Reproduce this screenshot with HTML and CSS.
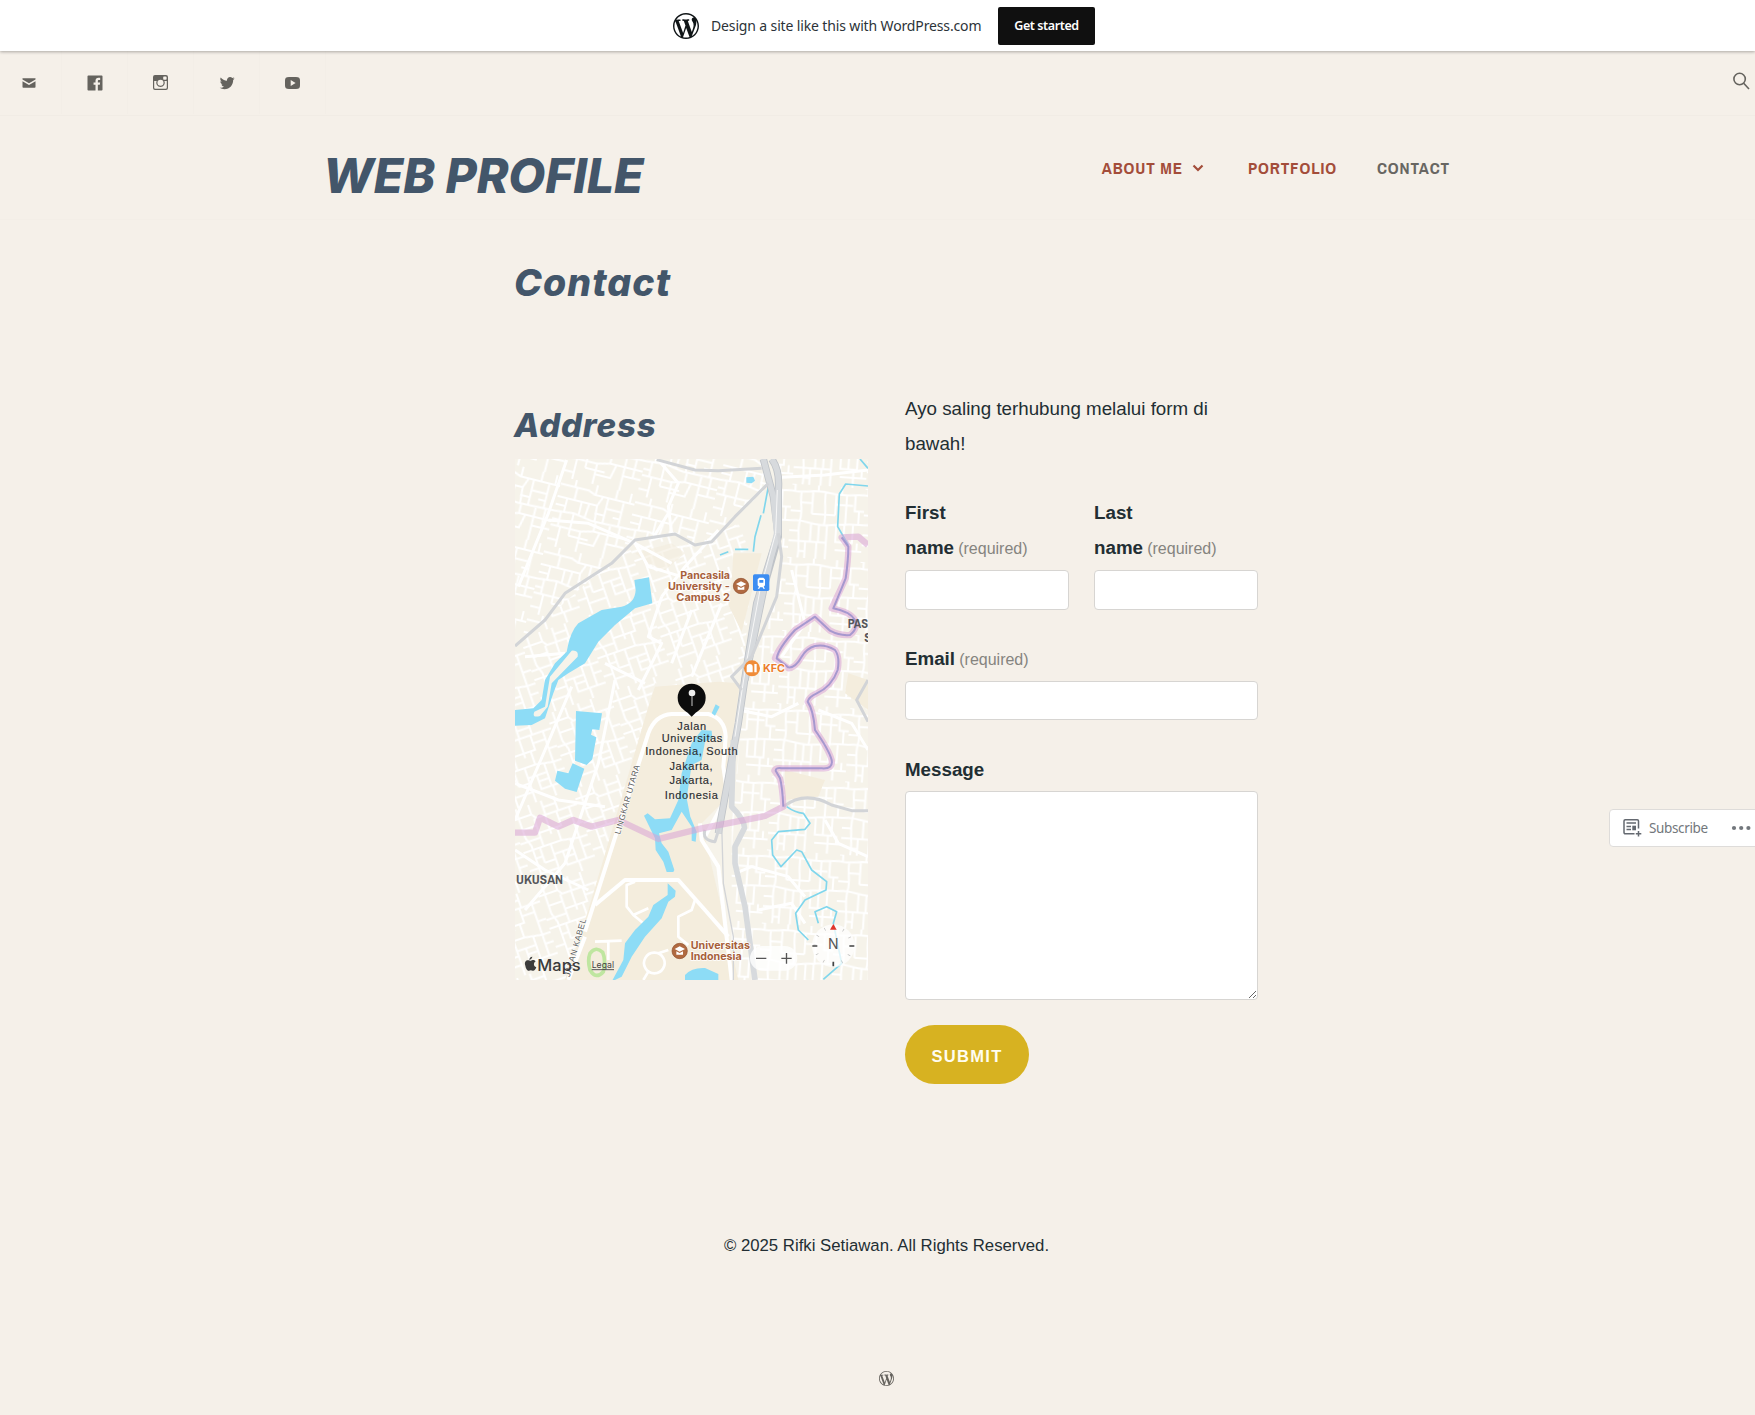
FILE: index.html
```html
<!DOCTYPE html>
<html lang="id">
<head>
<meta charset="utf-8">
<title>Contact – WEB PROFILE</title>
<link rel="stylesheet" href="styles.css">
</head>
<body>
<svg class="defs" width="0" height="0" aria-hidden="true">
  <symbol id="wp" viewBox="0 0 20 20"><path d="M20 10c0-5.51-4.49-10-10-10C4.48 0 0 4.49 0 10c0 5.52 4.48 10 10 10 5.51 0 10-4.48 10-10zM7.78 15.37L4.37 6.22c.55-.02 1.17-.08 1.17-.08.5-.06.44-1.13-.06-1.11 0 0-1.45.11-2.37.11-.18 0-.37 0-.58-.01C4.12 2.69 6.87 1.11 10 1.11c2.33 0 4.45.87 6.05 2.34-.68-.11-1.65.39-1.65 1.58 0 .74.45 1.36.9 2.1.35.61.55 1.36.55 2.46 0 1.49-1.4 5-1.4 5l-3.03-8.37c.54-.02.82-.17.82-.17.5-.05.44-1.25-.06-1.22 0 0-1.44.12-2.38.12-.87 0-2.33-.12-2.33-.12-.5-.03-.56 1.2-.06 1.22l.92.08 1.26 3.41zM17.41 10c.24-.64.74-1.87.43-4.25.7 1.29 1.05 2.71 1.05 4.25 0 3.29-1.73 6.24-4.4 7.78.97-2.59 1.94-5.2 2.92-7.78zM6.1 18.09C3.12 16.65 1.11 13.53 1.11 10c0-1.3.23-2.48.72-3.59C3.25 10.3 4.67 14.2 6.1 18.09zm4.03-6.63l2.58 6.98c-.86.29-1.76.45-2.71.45-.79 0-1.57-.11-2.29-.33.81-2.38 1.62-4.74 2.42-7.1z"/></symbol>
</svg>

<div class="promo">
  <svg class="promo-logo"><use href="#wp"/></svg>
  <span class="promo-text">Design a site like this with WordPress.com</span>
  <a class="promo-button">Get started</a>
</div>

<div class="toolbar">
  <ul class="social">
    <li><svg width="18" height="18" viewBox="0 0 18 18"><path d="M2.5 4.2h13v1.3L9 9.3 2.500 5.500zM2.500 7.300 9 11l6.500-3.700v5.600a.8.8 0 0 1-.8.8H3.300a.8.8 0 0 1-.8-.8z"/></svg></li>
    <li><svg width="20" height="20" viewBox="0 0 24 24"><path d="M20.007,3H3.993C3.445,3,3,3.445,3,3.993v16.013C3,20.555,3.445,21,3.993,21h8.621v-6.971h-2.346v-2.717h2.346V9.31c0-2.325,1.42-3.591,3.494-3.591c0.993,0,1.847,0.074,2.096,0.107v2.43l-1.438,0.001c-1.128,0-1.346,0.536-1.346,1.323v1.734h2.69l-0.35,2.717h-2.34V21h4.587C20.555,21,21,20.555,21,20.007V3.993C21,3.445,20.555,3,20.007,3z"/></svg></li>
    <li><svg width="15" height="15" viewBox="0 0 15 15"><path fill-rule="evenodd" d="M2 0h11a2 2 0 0 1 2 2v11a2 2 0 0 1-2 2H2a2 2 0 0 1-2-2V2a2 2 0 0 1 2-2zM1.200 6v6.800a1 1 0 0 0 1 1h10.600a1 1 0 0 0 1-1V6h-2.400a4.300 4.300 0 1 1-7.800 0zM11 1.500h1.800a.8.8 0 0 1 .8.8V4a.8.8 0 0 1-.8.800H11a.8.8 0 0 1-.8-.8V2.300a.8.8 0 0 1 .8-.8zM7.500 4.700a3 3 0 1 0 0 6.100 3 3 0 0 0 0-6.100z"/></svg></li>
    <li><svg width="18" height="18" viewBox="0 0 24 24"><path d="M22.23,5.924c-0.736,0.326-1.527,0.547-2.357,0.646c0.847-0.508,1.498-1.312,1.804-2.27c-0.793,0.47-1.671,0.812-2.606,0.996C18.324,4.498,17.257,4,16.077,4c-2.266,0-4.103,1.837-4.103,4.103c0,0.322,0.036,0.635,0.106,0.935C8.67,8.867,5.647,7.234,3.623,4.751C3.27,5.357,3.067,6.062,3.067,6.814c0,1.424,0.724,2.679,1.825,3.415c-0.673-0.021-1.305-0.206-1.859-0.513c0,0.017,0,0.034,0,0.052c0,1.988,1.414,3.647,3.292,4.023c-0.344,0.094-0.707,0.144-1.081,0.144c-0.264,0-0.521-0.026-0.772-0.074c0.522,1.63,2.038,2.816,3.833,2.85c-1.404,1.1-3.174,1.756-5.096,1.756c-0.331,0-0.658-0.019-0.979-0.057c1.816,1.164,3.973,1.843,6.29,1.843c7.547,0,11.675-6.252,11.675-11.675c0-0.178-0.004-0.355-0.012-0.531C20.985,7.47,21.68,6.747,22.23,5.924z"/></svg></li>
    <li><svg width="15" height="12" viewBox="0 0 15 12"><path fill-rule="evenodd" d="M4 0h7c3 0 4 1 4 3.500v5c0 2.500-1 3.500-4 3.500H4c-3 0-4-1-4-3.500v-5C0 1 1 0 4 0zM5.700 3v6L10.600 6z"/></svg></li>
  </ul>
  <svg class="search" width="17" height="18" viewBox="0 0 17 18"><circle cx="6.600" cy="7" r="5.700"/><path d="M10.700 11.300 16 17"/></svg>
</div>

<header class="masthead">
  <div class="site-title">WEB PROFILE</div>
  <nav class="menu">
    <a class="about">ABOUT ME</a>
    <svg class="chevron" width="12" height="8" viewBox="0 0 12 8"><path d="M1.500 1.500 6 6l4.500-4.500"/></svg>
    <a class="portfolio">PORTFOLIO</a>
    <a class="current">CONTACT</a>
  </nav>
</header>

<main class="content">
  <h1 class="page-title">Contact</h1>
  <div class="columns">
    <section>
      <h2 class="address">Address</h2>
      <svg class="map" viewBox="30 207 1059 1563">
        <defs>
          <pattern id="streetsA" width="230" height="210" patternUnits="userSpaceOnUse" patternTransform="rotate(14)">
            <path class="street" d="M0 22h88l20 8h122M0 60h52v-38M52 60h70l12-30M0 105l60-6 58 10 112-4M30 60v42M75 62v40M98 62l-4 42M122 60l4 48M150 30v76M150 62h48M198 34v70M172 0v30M0 148h90l40-10h100M22 105v43M60 100v68M60 168h60M92 148v62M92 180h48l10-44M175 106v32M205 106v58h25M175 165h30M175 138v72M30 148v62M0 190h30M45 0v22M110 0v30M0 84h30M215 0v30M176 84h22M120 84h30M130 138v-30M0 128h22"/>
          </pattern>
          <pattern id="streetsB" width="200" height="240" patternUnits="userSpaceOnUse" patternTransform="rotate(-19)">
            <path class="street" d="M20 0v90l10 30v120M0 30h60l10 14h130M64 44v88M20 66h44M98 44v60M64 90h70v-46M134 70h40M174 44v98M20 104h44M30 132h90l54 10h26M120 132v-42M52 132v48M30 160h22M86 132v108M86 164h60v-28M52 180h34M30 208h56M114 164v44h86M146 164v44M174 142v66M114 184h32M150 208v32M0 104h20M0 132h30M0 190h30M100 0v44M140 0v44M60 0v30M100 20h40M174 100h26M174 170h26"/>
          </pattern>
          <pattern id="streetsC" width="220" height="220" patternUnits="userSpaceOnUse" patternTransform="rotate(4)">
            <path class="street" d="M0 20c40 10 60-10 110 0s70 0 110 0M30 22c-6 30 8 50 0 86s6 70 0 112M64 16v70M30 54h34M64 86h70M102 18c-4 40 8 70 0 100M134 24v62M134 54h52M166 24v92M192 20v50h28M0 110c40-8 60 10 102 8s70-10 118-8M0 80h30M64 114v56h48M88 116v54M112 118v102M140 116v50h50v-54M164 114v52M0 170h64M50 170v50M84 170v50M140 190h80M180 166v54M30 200h20M0 140h30M205 110v-40M205 190v-24M0 0h10v20M80 0v18M150 0v22"/>
          </pattern>
          <clipPath id="mapClip"><rect x="30" y="207" width="1059" height="1563"/></clipPath>
        </defs>
        <g clip-path="url(#mapClip)">
          <rect x="30" y="207" width="1059" height="1563" fill="#f6f3ea"/>
          <path fill="url(#streetsA)" d="M30 207H780L790 290 620 450 570 465 510 430 390 450 30 770z"/>
          <path fill="url(#streetsB)" d="M30 770 390 450 510 430 570 465 700 400 740 500 720 800 650 900 450 880 250 1620 180 1770H30z"/>
          <path fill="url(#streetsC)" d="M820 207h269v1563H680V1300L720 900 830 560z"/>

          <g fill="#f4eddd">
            <path d="M685 490h85l-60 235-40-80 10-70z"/>
            <path d="M640 875 705 880 680 1060 650 1240 590 1300 700 1770H180L250 1560 330 1290 430 950 450 890z"/>
            <path d="M840 1140 960 1170 940 1220 840 1230zM1030 850 1090 870V960L1020 910z"/>
            <path d="M390 490 500 460 540 490 480 540 430 520z" opacity=".6"/>
          </g>

          <g class="road">
            <path d="M185 210 130 370 40 590M130 390 250 400 390 460 500 520M390 460 430 530 530 560M500 430 490 350 520 280 460 210M490 370 440 450M640 420 540 530 470 620M830 262 960 255 1089 240M470 620 430 740 470 760 440 820 400 900M560 660 500 820M650 640 560 860M60 800 180 790M300 820 420 880"/>
            <path d="M200 890 120 1080 30 1290M330 870 280 1120 180 1420 60 1560M30 1180 160 1230 300 1250M30 1380 120 1440 250 1500"/>
            <path d="M690 1450 740 1430 850 1460 900 1520M760 1560 860 1540 900 1600M700 960 800 980 880 940M860 540 900 700 830 800M960 1290 1000 1360 1089 1400M940 960 1040 1000 1089 1080"/>
          </g>
          <g class="avenue">
            <path d="M240 1625 430 1030Q450 975 500 972H610Q660 985 662 1040L655 1130 665 1200M585 1300 590 1350 640 1430 680 1770"/>
            <path d="M270 1545 360 1470H520L600 1560 670 1640M600 1340 665 1220M240 1640 190 1770"/>
            <path class="lane" d="M390 1475 365 1485V1550L385 1575 430 1555M385 1575 415 1600M570 1530 560 1560 520 1580V1640L550 1665M270 1655 350 1652M310 1655V1710M490 1680 460 1690M447 1688a31 31 0 1 0 2 0zM430 1745 415 1770"/>
          </g>

          <g class="water">
            <path d="M388 570 432 562 442 640 390 655 330 705 280 755 240 820 190 850 160 870 145 910 120 985 80 1005 30 1007V960L85 955 110 930 120 870 150 820 185 785Q195 725 220 700L290 660 350 650Q390 640 392 600z"/>
            <path d="M213 963 291 970 283 1020 262 1018 258 1034 274 1042 262 1108 245 1125 210 1112z"/>
            <path d="M203 1120 238 1136 215 1206 180 1196 150 1172 157 1142 190 1150z"/>
            <path d="M632 943 644 950 630 977 620 970zM590 1020 620 1022 622 1045 600 1055 590 1110 560 1125 545 1225 556 1280 575 1325 572 1355 560 1352V1310L530 1265 500 1320 462 1330 470 1360 490 1385 508 1440 505 1446H485L475 1415 452 1380 450 1345 417 1277 428 1270 450 1288 495 1285 520 1230 530 1150 560 1060z"/>
            <path d="M488 1480 512 1502 510 1520 490 1535 470 1585 420 1640 380 1700 350 1760 320 1775 355 1710 360 1660 390 1620 430 1580 445 1545 488 1515z"/>
            <path d="M540 1755Q560 1732 600 1734L640 1752V1775H540zM724 262 745 260 750 272 740 280 724 278z"/>
          </g>
          <path d="M200 782Q222 780 218 800L140 880 128 950 105 978Q80 985 88 965L120 950 135 860z" fill="#f6f3ea"/>
          <path class="stream" d="M1065 207 1089 235M1089 288 1022 282 1003 312 998 410 1030 465M775 210 790 290 775 370M768 376 750 440 745 485M645 495 670 485M690 478 730 478M845 1250Q870 1268 895 1270L915 1300 900 1318 820 1325 800 1350 803 1395 828 1430 875 1380 890 1385 920 1440 965 1475 963 1500 900 1530 872 1570 880 1620 910 1650M940 1600 930 1565 965 1550 995 1565 985 1600 1010 1720 955 1768"/>

          <g class="highway-case">
            <path d="M775 207 805 320 820 440 780 580 720 870"/>
            <path d="M800 207Q825 240 820 300V430L755 640 725 830 700 1000 640 1330"/>
          </g>
          <g class="highway">
            <path d="M775 207 805 320 815 430 780 580 720 870"/>
            <path d="M800 207Q825 240 820 300V430L755 640 725 830 700 1000 640 1330"/>
            <path d="M685 1050 680 1250Q720 1290 718 1315L690 1370V1420L720 1550 750 1770"/>
          </g>
          <path d="M817 300 812 430 765 600 722 830 690 1040" stroke="#f7f7f7" stroke-width="3" fill="none"/>
          <g class="minor-gray">
            <path d="M455 209 570 240 640 242 770 235M30 768 120 690 180 610 320 520 390 450 510 432 570 465 620 455 690 380 790 280"/>
            <path d="M820 430 830 500 815 620 740 800 680 860 710 900M1089 995 1055 930 1089 870M835 1250Q900 1200 980 1245L1040 1262H1089M600 1320Q590 1350 630 1355L650 1290"/>
            <path class="rail" d="M650 1300 655 1480 685 1640V1770"/>
          </g>

          <path class="border-wide" d="M30 1328H90L105 1283 160 1310 205 1290 260 1310 340 1290 460 1347 590 1315 780 1278 835 1250Q832 1190 825 1165L808 1142Q812 1132 830 1135H950Q985 1138 980 1110 972 1080 930 1020 925 960 908 935 912 920 935 910 980 890 998 840 1005 800 990 780 960 762 930 768 905 775 890 800 870 835 850 835L810 805Q820 775 870 720L930 680 975 722Q1005 738 1035 735 1060 715 1050 690 1035 665 980 655L1022 565Q1030 510 1030 470L1010 442 1060 440 1089 465"/>
          <path class="border-line" d="M835 1250Q832 1190 825 1165L812 1142Q812 1132 830 1135H950Q985 1138 980 1110 972 1080 930 1020 925 960 908 935 912 920 935 910 980 890 998 840 1005 800 990 780 960 762 930 768 905 775 890 800 870 835 850 832L815 805Q820 775 870 720L930 680 975 722Q1005 738 1035 735 1060 715 1050 690 1035 665 985 655L1022 565Q1030 510 1030 470L1010 442"/>

          <path d="M255 1690q-8 20 0 50 18 30 40 5 8-35-2-58-20-20-38 3z" fill="none" stroke="#bfe6a0" stroke-width="11"/>

          <g class="poi">
            <text x="526" y="566" textLength="149" lengthAdjust="spacingAndGlyphs">Pancasila</text>
            <text x="489" y="600" textLength="185" lengthAdjust="spacingAndGlyphs">University -</text>
            <text x="514" y="633" textLength="161" lengthAdjust="spacingAndGlyphs">Campus 2</text>
            <text x="557" y="1678" textLength="178" lengthAdjust="spacingAndGlyphs">Universitas</text>
            <text x="557" y="1711" textLength="153" lengthAdjust="spacingAndGlyphs">Indonesia</text>
            <text x="774" y="847" textLength="66" lengthAdjust="spacingAndGlyphs" class="food">KFC</text>
          </g>
          <g fill="#b06a41" stroke="#8e4d2a" stroke-width="2"><circle cx="708" cy="588" r="23"/><circle cx="524" cy="1683" r="23"/></g>
          <g fill="#fff"><path d="M693 582 708 574 724 582 708 590zM698 589 708 594 718 589V599H698zM509 1677 524 1669 540 1677 524 1685zM514 1684 524 1689 534 1684V1694H514z"/></g>
          <circle cx="741" cy="835" r="24" fill="#f08c38"/>
          <path fill="#fff" d="M725 831q0-9 9-9t9 9v16h-18zM748 822h7v25h-7z"/>
          <rect x="744" y="553" width="49" height="50" rx="5" fill="#3c8df2"/>
          <path fill="#fff" fill-rule="evenodd" d="M763 563h12l5 5v18l-4 4 4 6h-5l-2-4h-8l-2 4h-5l4-6-4-4v-18zM763 570v8h12v-8z"/>

          <g class="place">
            <text x="1028" y="714" textLength="61" lengthAdjust="spacingAndGlyphs">PAS</text><text x="1078" y="755">S</text>
            <text x="33" y="1482" textLength="141" lengthAdjust="spacingAndGlyphs">UKUSAN</text>
          </g>
          <text class="roadname" transform="translate(345 1334) rotate(-74)" textLength="215">LINGKAR UTARA</text>
          <text class="roadname" transform="translate(194 1762) rotate(-74)" textLength="180">JALAN KABEL</text>

          <path d="M560 881a42 42 0 0 1 42 42c0 26-19 37-30 45l-12 12-12-12c-11-8-30-19-30-45a42 42 0 0 1 42-42z" fill="#0c0c0c"/>
          <circle cx="561" cy="909" r="10" fill="#eee"/><path d="M561 918v30" stroke="#999" stroke-width="4"/>
          <g class="pin-label" text-anchor="middle">
            <text x="560" y="1019" textLength="86">Jalan</text>
            <text x="561" y="1057" textLength="182">Universitas</text>
            <text x="559" y="1095" textLength="277">Indonesia, South</text>
            <text x="558" y="1139" textLength="129">Jakarta,</text>
            <text x="558" y="1182" textLength="129">Jakarta,</text>
            <text x="559" y="1226" textLength="159">Indonesia</text>
          </g>

          <g fill="#fff"><rect x="735" y="1668" width="142" height="74" rx="37" opacity=".8"/><circle cx="985" cy="1667" r="64" opacity=".75"/></g>
          <path d="M753 1705h31M829 1705h31M844.500 1689v32" stroke="#555" stroke-width="4"/>
          <circle cx="985" cy="1667" r="55" fill="none" stroke="#999" stroke-width="9" stroke-dasharray="2 26.800" opacity=".6"/>
          <path d="M922 1668h15M1033 1668h15M985 1715v14" stroke="#444" stroke-width="5"/>
          <path d="M985 1602 995 1619H975z" fill="#e0352b"/>
          <text class="compass" x="985" y="1676" text-anchor="middle">N</text>
          <path fill="#3b3b3b" d="M82 1701q-2 8-9 9 0-9 9-10zM61 1727c-4-11 2-17 10-16 5 2 6 2 12-1 4-1 7 1 9 4-8 5-6 16 2 18-3 7-6 11-11 10-4-2-7-2-11 0-6 1-10-8-11-15z"/>
          <text class="maps" x="97" y="1742" textLength="130" lengthAdjust="spacingAndGlyphs">Maps</text>
          <text class="legal" x="260" y="1734" textLength="67">Legal</text>
          <path d="M260 1739h67" stroke="#555" stroke-width="3"/>
        </g>
      </svg>
    </section>

    <form class="form">
      <p class="intro">Ayo saling terhubung melalui form di bawah!</p>
      <div class="name-row">
        <div class="field"><label>First<br>name <span>(required)</span></label><input type="text"></div>
        <div class="field"><label>Last<br>name <span>(required)</span></label><input type="text"></div>
      </div>
      <div class="field"><label>Email <span>(required)</span></label><input type="text"></div>
      <div class="field"><label>Message</label><textarea></textarea></div>
      <button class="submit" type="button">SUBMIT</button>
    </form>
  </div>
</main>

<footer class="footer">
  <p class="copyright">© 2025 Rifki Setiawan. All Rights Reserved.</p>
  <div class="credit"><svg width="15" height="15"><use href="#wp"/></svg></div>
</footer>

<div class="subscribe">
  <svg width="19" height="18" viewBox="0 0 19 18"><path fill="none" stroke="#646970" stroke-width="1.500" d="M11.500 14.700H2.200a1.200 1.200 0 0 1-1.200-1.200V2A1.200 1.200 0 0 1 2.200.8h12.100A1.200 1.200 0 0 1 15.500 2v7.500M3.500 4h9.500M3.500 7.500h4.500M3.500 10.500h4.500M15.500 12v5.500M12.800 14.700h5.500"/><path fill="#646970" d="M9.300 6.700H13v4.600H9.300z"/></svg>
  <span>Subscribe</span>
  <svg class="dots" width="20" height="6" viewBox="0 0 20 6"><circle cx="3" cy="3" r="2.100"/><circle cx="10.200" cy="3" r="2.100"/><circle cx="17.400" cy="3" r="2.100"/></svg>
</div>
</body>
</html>
```
FILE: styles.css
```css
* { box-sizing: border-box; }
body {
  margin: 0;
  height: 1415px;
  overflow: hidden;
  background: #f5f0e9;
  color: #222e33;
  font-family: "Liberation Sans", Arial, sans-serif;
  font-size: 18.75px;
}
.defs { position: absolute; }

.promo {
  position: relative;
  display: flex;
  align-items: center;
  height: 51px;
  padding: 0 0 0 673px;
  background: #fff;
  box-shadow: 0 1px 3px rgba(0, 0, 0, .3);
  font-family: "Noto Sans", "Open Sans", sans-serif;
}
.promo-logo { width: 26px; height: 26px; margin-right: 12px; fill: #101517; }
.promo-text { width: 287px; font-size: 14px; letter-spacing: -.14px; white-space: nowrap; color: #2c3338; }
.promo-button {
  display: flex;
  align-items: center;
  justify-content: center;
  width: 97px;
  height: 38px;
  border-radius: 2px;
  background: #101010;
  color: #fff;
  font-size: 12.5px;
  font-weight: 600;
  letter-spacing: -.4px;
}

.toolbar {
  display: flex;
  justify-content: space-between;
  height: 65px;
  border-bottom: 1px solid #f1ece5;
}
.social { display: flex; margin: 0; padding: 0; list-style: none; }
.social li {
  display: flex;
  align-items: center;
  justify-content: center;
  width: 66px;
  height: 63px;
  border-right: 1px solid #f3eee7;
  fill: #65635e;
}
.social li:first-child { width: 62px; padding-right: 4px; }
.search { margin: 21px 5px 0 0; fill: none; stroke: #65635e; stroke-width: 1.6; }

.masthead {
  display: flex;
  justify-content: space-between;
  height: 104px;
  padding: 30px 305px 0 323px;
  border-bottom: 1px solid #f3eee7;
}
.site-title {
  font: italic 800 48px/60px Inter, sans-serif;
  letter-spacing: -.1px;
  color: #43566a;
  white-space: nowrap;
}
.menu {
  display: flex;
  height: 43px;
  align-items: center;
  font: 700 17px/20px "Liberation Sans Narrow", "Archivo Narrow", "Liberation Sans", sans-serif;
  letter-spacing: .85px;
  color: #a34d3a;
}
.chevron { margin: 0 44px 0 9px; fill: none; stroke: #a34d3a; stroke-width: 2.2; }
.portfolio { margin-right: 40px; }
.current { color: #686662; }

.content { padding: 37px 497px 0 514px; }
.page-title { margin: 0; font: italic 800 37.5px/52px Inter, sans-serif; letter-spacing: 1.1px; color: #43566a; }
.columns { display: grid; grid-template-columns: 353px 353px; gap: 37px; margin: 82px 0 0 1px; }
.address { margin: 11px 0 11px -1px; font: italic 800 33px/46px Inter, sans-serif; letter-spacing: .8px; color: #43566a; }
.map { display: block; width: 353px; height: 521px; }

.street { fill: none; stroke: #fff; stroke-width: 6; }
.road { fill: none; stroke: #fff; stroke-width: 9; stroke-linejoin: round; }
.avenue { fill: none; stroke: #fff; stroke-width: 12; stroke-linejoin: round; }
.lane { stroke-width: 8; }
.water { fill: #8ddcf6; }
.stream { fill: none; stroke: #80d6ec; stroke-width: 5; stroke-linejoin: round; }
.highway-case { fill: none; stroke: #bfc3c8; stroke-width: 22; }
.highway { fill: none; stroke: #d7dadd; stroke-width: 17; stroke-linejoin: round; }
.minor-gray { fill: none; stroke: #d2d4d7; stroke-width: 9; stroke-linejoin: round; }
.rail { stroke-width: 4; }
.border-wide { fill: none; stroke: #d9a2d3; stroke-width: 19; stroke-linejoin: round; opacity: .55; }
.border-line { fill: none; stroke: #9a8fcb; stroke-width: 6; stroke-linejoin: round; opacity: .85; }
.map text { font-family: Inter, sans-serif; }
.poi { font-size: 31px; font-weight: 700; fill: #a7603a; stroke: #fff; stroke-width: 4; paint-order: stroke; }
.poi .food { fill: #ec7d2c; }
.map .place text { font-family: "Liberation Sans Narrow", "Archivo Narrow", "Liberation Sans", sans-serif; font-size: 40px; font-weight: 700; fill: #55565a; }
.map .roadname { font-family: "Liberation Sans", sans-serif; font-size: 25px; fill: #5a5a58; stroke: #fff; stroke-width: 3; paint-order: stroke; }
.map .pin-label text { font-family: "Liberation Sans", sans-serif; font-size: 33px; fill: #292c30; stroke: #292c30; stroke-width: .4; }
.map .compass { font-size: 42px; fill: #555; }
.map .maps { font-size: 48px; font-weight: 500; fill: #3b3b3b; }
.map .legal { font-size: 26px; fill: #444; }

.form { display: flex; flex-direction: column; line-height: 35px; }
.intro { margin: 0 0 34px; }
.name-row { display: grid; grid-template-columns: 164px 164px; gap: 25px; }
.field { display: flex; flex-direction: column; margin-bottom: 32px; }
.name-row .field { margin-bottom: 31px; }
label { font-weight: 700; }
label span { margin-left: -1px; font-size: 16px; font-weight: 400; color: #85847f; }
input, textarea {
  width: 100%;
  margin: 4px 0 0;
  border: 1px solid #d7d5d2;
  border-radius: 4px;
  background: #fff;
}
input { height: 39px; }
.name-row input { height: 40px; }
textarea { display: block; height: 209px; resize: vertical; }
.field:has(textarea) { margin-bottom: 25px; }
.submit {
  width: 124px;
  height: 59px;
  padding: 3px 0 0;
  border: 0;
  border-radius: 30px;
  background: #d7b221;
  color: #fffdf0;
  font: 700 16.5px "Liberation Sans", sans-serif;
  letter-spacing: 1.3px;
}

.footer { margin-top: 145px; padding-left: 18px; text-align: center; }
.copyright { margin: 0; font-size: 16.75px; line-height: 34px; }
.credit { margin-top: 94px; padding-top: 12px; fill: #65635e; }

.subscribe {
  position: fixed;
  top: 809px;
  right: -4px;
  display: flex;
  align-items: center;
  width: 150px;
  height: 38px;
  padding: 0 0 0 13px;
  border: 1px solid #dedcda;
  border-radius: 4px;
  background: #fff;
  color: #72777c;
  font: 13.5px "Noto Sans", sans-serif;
  letter-spacing: -.35px;
}
.subscribe span { width: 82px; margin-left: 7px; }
.dots { fill: #72777c; }
```
